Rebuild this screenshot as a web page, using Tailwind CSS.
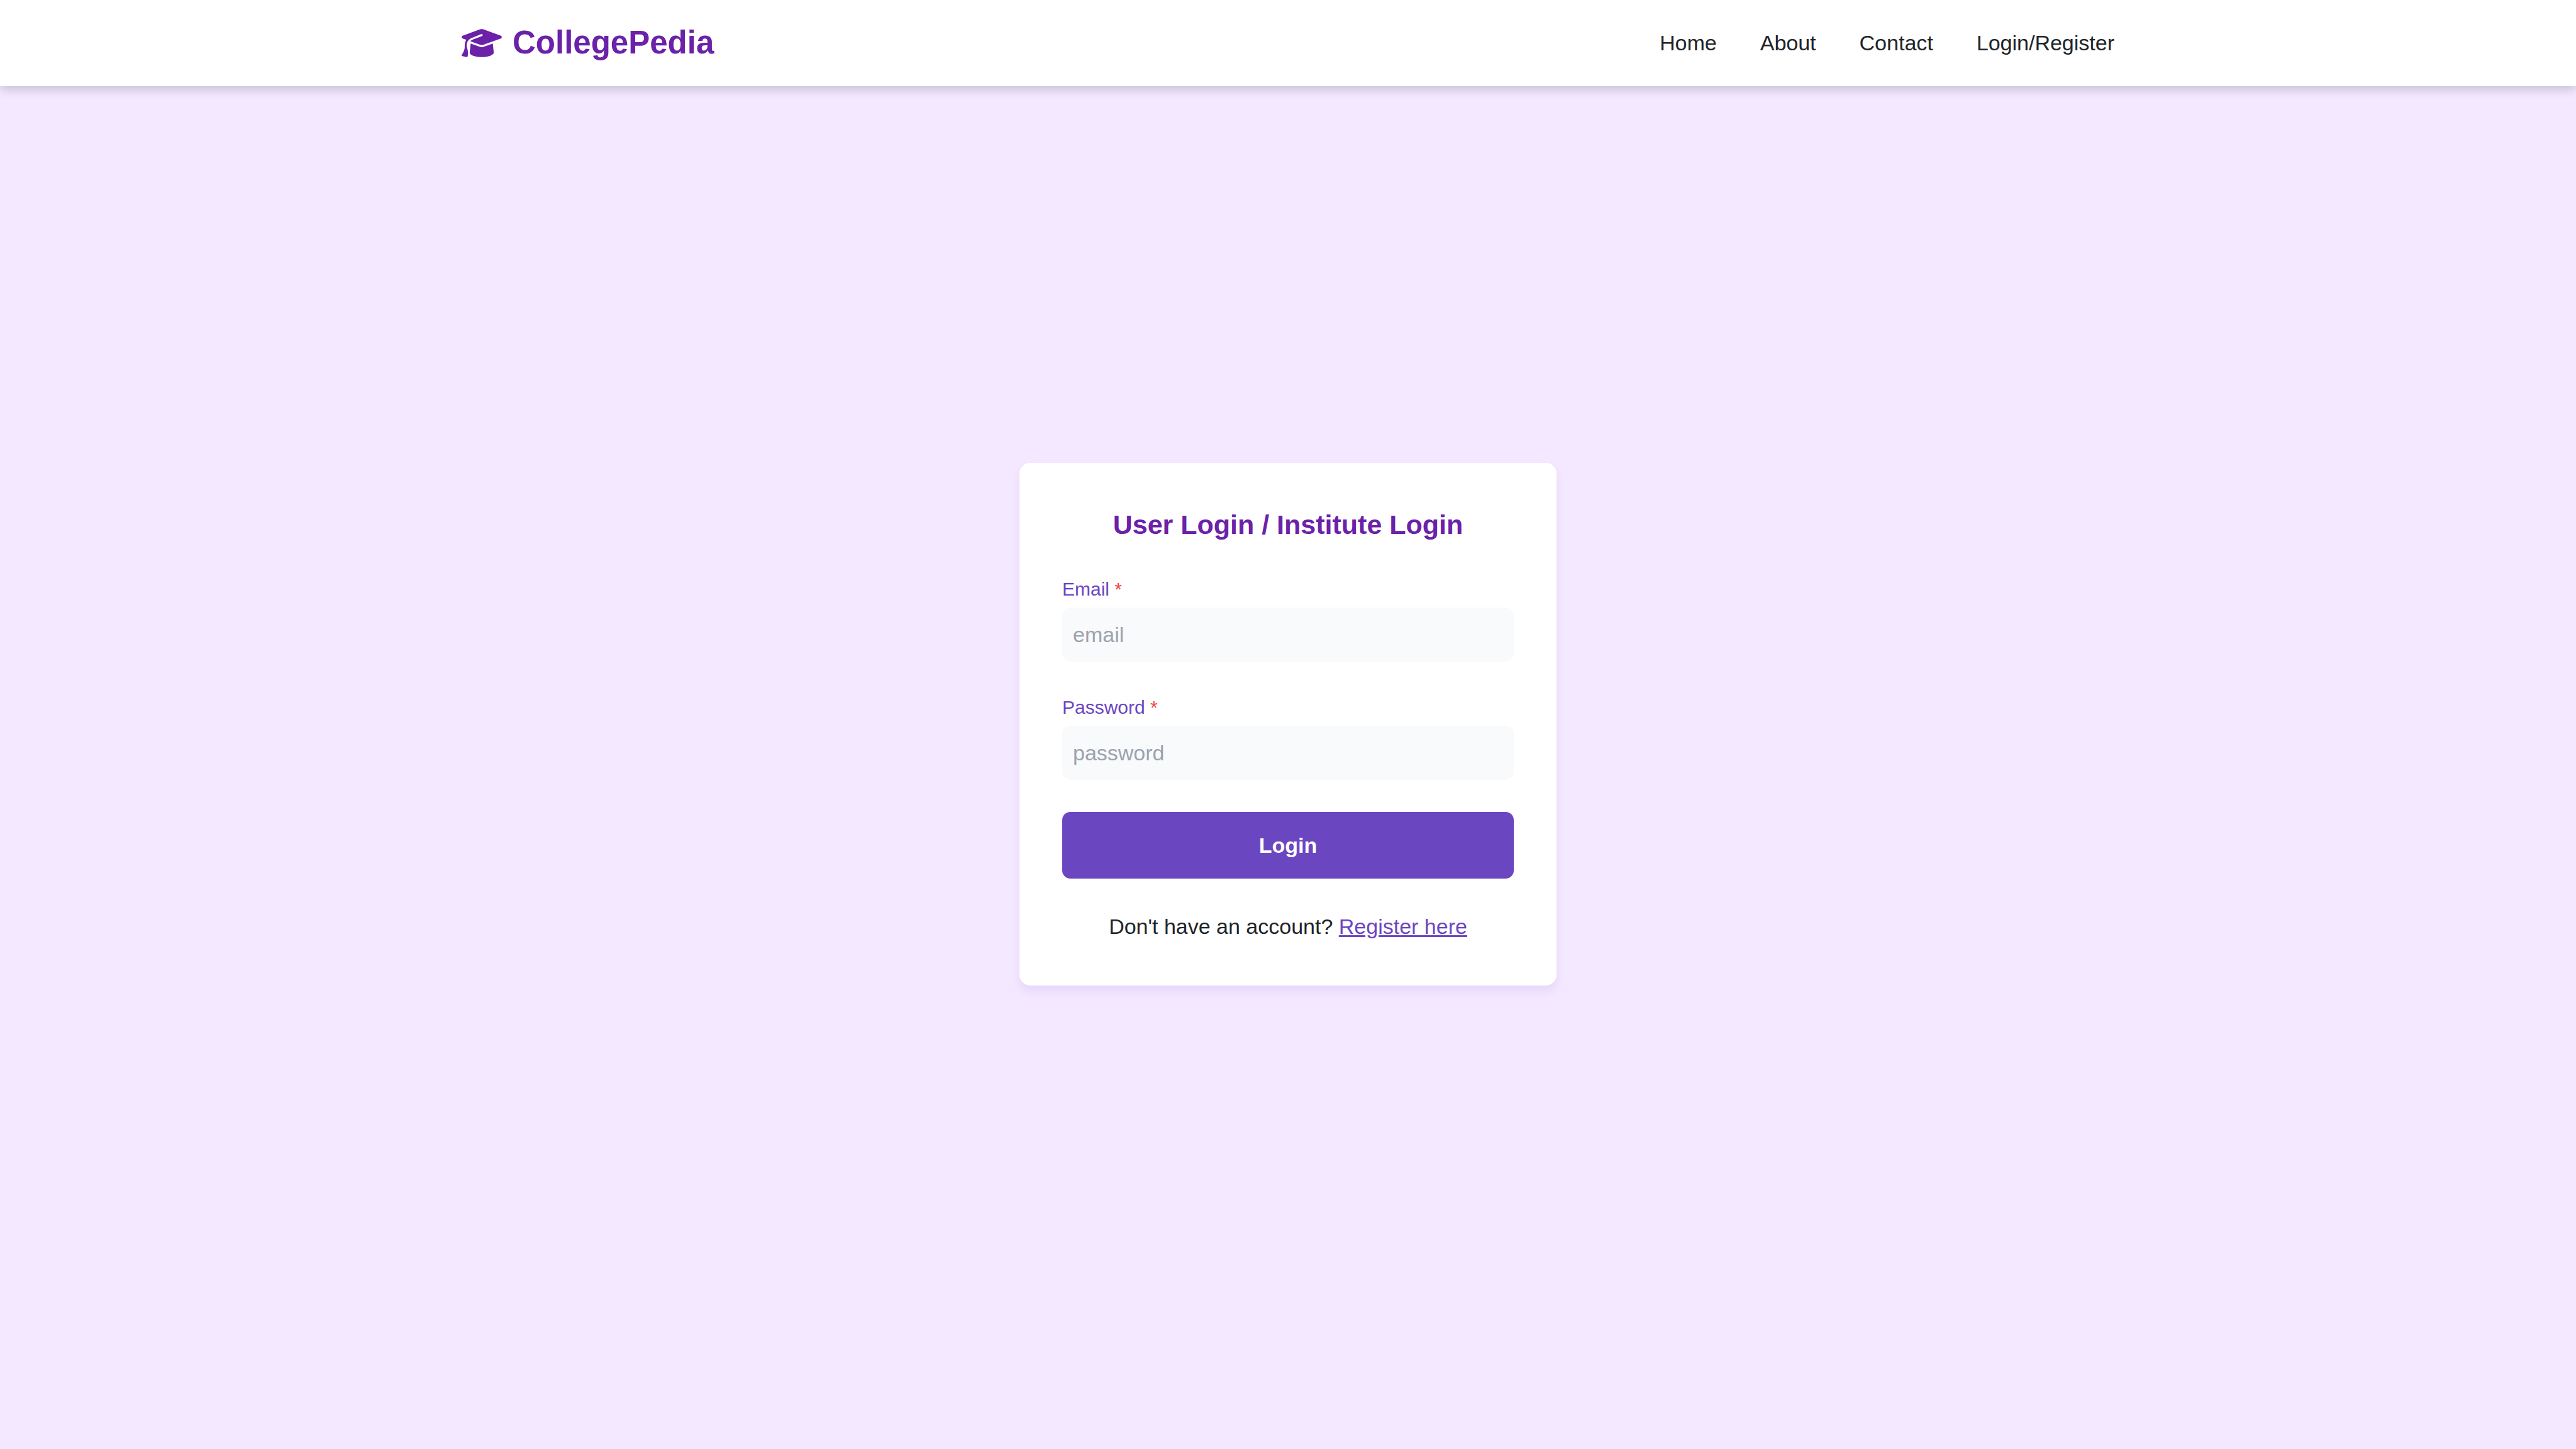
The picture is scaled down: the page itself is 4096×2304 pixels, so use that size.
<!DOCTYPE html>
<html lang="en">
<head>
<meta charset="utf-8">
<meta name="viewport" content="width=device-width, initial-scale=1">
<title>CollegePedia - Login</title>
<script src="https://cdn.jsdelivr.net/npm/@tailwindcss/browser@4"></script>
</head>
<body class="flex min-h-screen flex-col bg-[#f3e8ff] font-['Liberation_Sans',Arial,sans-serif] text-[34px] leading-[51px] text-[#212529]">
  <header class="bg-white pb-px shadow-[0_4px_17px_rgba(0,0,0,0.2)]">
    <div class="mx-auto flex h-[136px] max-w-[2730px] items-center justify-between px-[51px]">
      <a href="#" class="flex items-center gap-[17px] text-[51px] leading-[68px] font-bold text-[#6b21a8]">
        <svg class="h-[51px] w-[64px]" viewBox="0 0 640 512" fill="currentColor" aria-hidden="true"><path d="M320 32c-8.1 0-16.1 1.4-23.7 4.1L15.8 137.4C6.3 140.9 0 149.9 0 160s6.3 19.1 15.8 22.6l57.9 20.9C57.3 229.3 48 259.8 48 291.9v28.1c0 28.4-10.8 57.7-22.3 80.8c-6.5 13-13.9 25.8-22.5 37.6C0 442.7-.9 448.3 .9 453.4s6 8.9 11.2 10.2l64 16c4.2 1.1 8.7 .3 12.4-2s6.3-6.1 7.1-10.4c8.6-42.8 4.3-81.2-2.1-108.7C90.3 344.3 86 329.8 80 316.5V291.9c0-30.2 10.2-58.7 27.9-81.5c12.9-15.5 29.6-28 49.2-35.7l157-61.7c8.2-3.2 17.5 .8 20.7 9s-.8 17.5-9 20.7l-157 61.7c-12.4 4.9-23.3 12.4-32.2 21.6l159.6 57.6c7.6 2.7 15.6 4.1 23.7 4.1s16.1-1.4 23.7-4.1L624.2 182.6c9.5-3.4 15.8-12.5 15.8-22.6s-6.3-19.1-15.8-22.6L343.7 36.1C336.1 33.4 328.1 32 320 32zM128 408c0 35.3 86 72 192 72s192-36.7 192-72L496.7 262.6 354.5 314c-11.1 4-22.8 6-34.5 6s-23.5-2-34.5-6L143.3 262.6 128 408z"/></svg>
        <span>CollegePedia</span>
      </a>
      <nav class="flex gap-[69px]">
        <a href="#">Home</a>
        <a href="#">About</a>
        <a href="#">Contact</a>
        <a href="#">Login/Register</a>
      </nav>
    </div>
  </header>

  <main class="flex flex-1 items-center justify-center pb-[138px]">
    <form class="flex w-full max-w-[854px] flex-col gap-[51px] rounded-[17px] bg-white p-[68px] shadow-[0_9px_13px_rgba(107,70,193,0.1)]">
      <h1 class="text-center text-[43px] leading-[60px] font-bold text-[#6b21a8]">User Login / Institute Login</h1>
      <div class="flex flex-col gap-2">
        <label for="email" class="text-[30px] leading-[43px] text-[#6b46c1]">Email <span class="text-[#ef4444]">*</span></label>
        <input id="email" type="email" placeholder="email" class="h-[86px] rounded-[13px] bg-[#f9fafc] px-[17px] placeholder:text-[#9ca3af]">
      </div>
      <div class="flex flex-col gap-2">
        <label for="password" class="text-[30px] leading-[43px] text-[#6b46c1]">Password <span class="text-[#ef4444]">*</span></label>
        <input id="password" type="password" placeholder="password" class="h-[86px] rounded-[13px] bg-[#f9fafc] px-[17px] placeholder:text-[#9ca3af]">
      </div>
      <button type="submit" class="h-[106px] rounded-[13px] bg-[#6b46c1] font-bold text-white">Login</button>
      <p class="text-center">Don't have an account? <a href="#" class="text-[#6b46c1] underline">Register here</a></p>
    </form>
  </main>
</body>
</html>
